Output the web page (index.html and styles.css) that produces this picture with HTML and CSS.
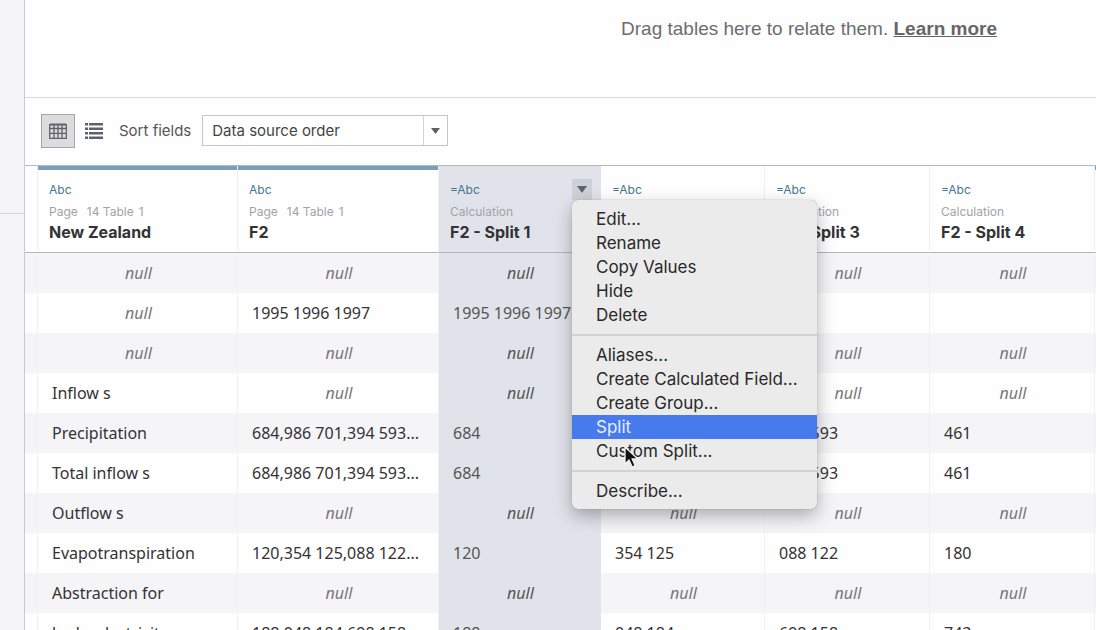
FILE: index.html
```html
<!DOCTYPE html>
<html lang="en">
<head>
<meta charset="utf-8">
<title>Data source</title>
<link rel="stylesheet" href="styles.css">
</head>
<body>
<div class="app">
  <aside class="side"><div class="side-top"></div></aside>
  <main class="main">
    <section class="canvas">
      <p class="hint">Drag tables here to relate them. <a href="#">Learn more</a></p>
    </section>
    <div class="toolbar">
      <button class="view view-on" aria-label="Grid view">
        <svg width="18" height="16" viewBox="0 0 18 16" fill="none" stroke="#5f626b"><path d="M1 1.5h16" stroke-width="2"/><path d="M.7 1v14.300h16.600V1M.7 5.500h16.600M.7 10.300h16.600M5 2v13M9 2v13M13 2v13" stroke-width="1.300"/></svg>
      </button>
      <button class="view" aria-label="List view">
        <svg width="18" height="16" viewBox="0 0 18 16" fill="#5f626b"><path d="M0 0h3v2.500H0zM4 0h14v2.500H4zM0 4.500h3V7H0zM4 4.500h14V7H4zM0 9h3v2.500H0zM4 9h14v2.500H4zM0 13.500h3V16H0zM4 13.500h14V16H4z"/></svg>
      </button>
      <label class="sort-label" for="sort">Sort fields</label>
      <div class="select">
        <select id="sort"><option>Data source order</option></select>
        <span class="select-arrow"><svg width="9" height="6" viewBox="0 0 9 6"><path d="M0 0h9L4.500 6z" fill="#5c5f63"/></svg></span>
      </div>
    </div>
    <div class="grid">
      <table class="data">
        <colgroup><col class="c-gutter"><col class="c-first"><col class="c-wide"><col class="c-sel"><col class="c-calc-first"><col class="c-calc"><col class="c-calc"><col></colgroup>
        <thead>
          <tr>
            <td></td>
            <th class="source"><span class="type">Abc</span><span class="origin"><span>Page</span> <span>14 Table</span> <span>1</span></span><span class="name">New Zealand</span></th>
            <th class="source"><span class="type">Abc</span><span class="origin"><span>Page</span> <span>14 Table</span> <span>1</span></span><span class="name">F2</span></th>
            <th class="sel"><span class="type">=Abc</span><span class="origin">Calculation</span><span class="name">F2 - Split 1</span>
              <div class="drop">
                <button class="drop-btn" aria-label="Field options"><svg width="10" height="7" viewBox="0 0 10 7"><path d="M0 0h10L5 7z" fill="#5b6570"/></svg></button>
                <div class="menu" role="menu">
                  <button role="menuitem">Edit...</button>
                  <button role="menuitem">Rename</button>
                  <button role="menuitem">Copy Values</button>
                  <button role="menuitem">Hide</button>
                  <button role="menuitem">Delete</button>
                  <hr>
                  <button role="menuitem">Aliases...</button>
                  <button role="menuitem">Create Calculated Field...</button>
                  <button role="menuitem">Create Group...</button>
                  <button role="menuitem" class="active">Split</button>
                  <button role="menuitem">Custom Split...</button>
                  <hr>
                  <button role="menuitem">Describe...</button>
                  <svg class="cursor" width="18" height="25" viewBox="0 0 18 25"><path d="M2 2v17l4-4 3.200 7 3-1.300-3-6.700h5.800z" fill="#111" stroke="#f4f4f4" stroke-width="1.300"/></svg>
                </div>
              </div>
            </th>
            <th><span class="type">=Abc</span></th>
            <th><span class="type">=Abc</span><span class="origin">Calculation</span><span class="name">F2 - Split 3</span></th>
            <th><span class="type">=Abc</span><span class="origin">Calculation</span><span class="name">F2 - Split 4</span></th>
            <th class="source"></th>
          </tr>
        </thead>
        <tbody>
          <tr><td></td><td class="null">null</td><td class="null">null</td><td class="sel null">null</td><td></td><td class="null">null</td><td class="null">null</td><td></td></tr>
          <tr><td></td><td class="null">null</td><td>1995 1996 1997</td><td class="sel">1995 1996 1997</td><td></td><td></td><td></td><td></td></tr>
          <tr><td></td><td class="null">null</td><td class="null">null</td><td class="sel null">null</td><td></td><td class="null">null</td><td class="null">null</td><td></td></tr>
          <tr><td></td><td>Inflow s</td><td class="null">null</td><td class="sel null">null</td><td></td><td class="null">null</td><td class="null">null</td><td></td></tr>
          <tr><td></td><td>Precipitation</td><td>684,986 701,394 593...</td><td class="sel">684</td><td></td><td>394 593</td><td>461</td><td></td></tr>
          <tr><td></td><td>Total inflow s</td><td>684,986 701,394 593...</td><td class="sel">684</td><td></td><td>394 593</td><td>461</td><td></td></tr>
          <tr><td></td><td>Outflow s</td><td class="null">null</td><td class="sel null">null</td><td class="null">null</td><td class="null">null</td><td class="null">null</td><td></td></tr>
          <tr><td></td><td>Evapotranspiration</td><td>120,354 125,088 122...</td><td class="sel">120</td><td>354 125</td><td>088 122</td><td>180</td><td></td></tr>
          <tr><td></td><td>Abstraction for</td><td class="null">null</td><td class="sel null">null</td><td class="null">null</td><td class="null">null</td><td class="null">null</td><td></td></tr>
          <tr><td></td><td>hydroelectricity</td><td>188,048 184,698 158...</td><td class="sel">188</td><td>048 184</td><td>698 158</td><td>743</td><td></td></tr>
        </tbody>
      </table>
    </div>
  </main>
</div>
</body>
</html>
```
FILE: styles.css
```css
* { box-sizing: border-box; }
body { margin: 0; font-family: "Noto Sans", sans-serif; font-size: 16px; color: #333; background: #fefefe; }
button { font: inherit; color: inherit; border: 0; padding: 0; background: none; }
svg { display: block; }
.app { display: flex; height: 100vh; overflow: hidden; }
.side { flex: none; width: 25px; background: #f5f4f7; border-right: 1px solid #c9cacd; }
.side-top { height: 214px; border-bottom: 1px solid #d5d5d9; }
.main { flex: 1; min-width: 0; display: flex; flex-direction: column; }
.canvas { flex: none; height: 98px; padding: 18px 99px 0 0; border-bottom: 1px solid #d9d9d9; text-align: right; }
.hint { margin: 0; font-family: "Liberation Sans", Arial, sans-serif; font-size: 19px; line-height: 22px; color: #6d6d6d; }
.hint a { color: #666; font-weight: bold; }
.toolbar { flex: none; height: 68px; display: flex; align-items: center; padding: 0 0 2px 16px; border-bottom: 1px solid #b6b8bb; font-family: Inter, sans-serif; }
.view { width: 34px; height: 34px; display: grid; place-items: center; margin-right: 2px; }
.view-on { background: #dcdcdf; border: 1px solid #a5a6a9; }
.sort-label { margin: 0 11px 0 6px; font-size: 15px; color: #555; }
.select { width: 246px; height: 31px; position: relative; display: flex; border: 1px solid #c4c5c7; background: #fff; }
.select select { appearance: none; flex: 1; border: 0; padding: 0 0 0 9px; background: none; font-family: Inter, sans-serif; font-size: 15px; color: #444; }
.select-arrow { position: absolute; right: 0; top: 0; bottom: 0; width: 24px; display: grid; place-items: center; border-left: 1px solid #d3d3d5; pointer-events: none; }
.grid { flex: 1; min-height: 0; overflow: hidden; }
.data { width: 100%; min-width: 1264px; table-layout: fixed; border-collapse: separate; border-spacing: 0; }
.c-gutter { width: 13px; }
.c-first { width: 200px; }
.c-wide { width: 201px; }
.c-sel { width: 162px; }
.c-calc-first { width: 164px; }
.c-calc { width: 165px; }
.data th { position: relative; height: 87px; padding: 17px 0 0 11px; vertical-align: top; text-align: left; font-weight: normal; border-right: 1px solid #f0f0f2; border-bottom: 1px solid #b3b5b9; font-family: Inter, sans-serif; }
.data thead td { border-bottom: 1px solid #b3b5b9; }
.data th.source::before { content: ""; position: absolute; top: 0; left: 0; right: 0; height: 4px; background: #78a1b9; }
.type, .origin, .name { display: block; white-space: nowrap; }
.type { font-size: 12px; line-height: 14px; color: #45758f; }
.origin { display: flex; gap: 9px; margin-top: 7px; font-size: 12px; line-height: 16px; color: #a3a3a5; }
.origin span + span + span { margin-left: -4px; }
.name { margin-top: 2px; font-size: 16px; line-height: 20px; font-weight: bold; color: #333; }
.data td { height: 40px; padding: 0 0 0 14px; white-space: nowrap; border-right: 1px solid #f1f1f3; }
.data td:first-child { padding: 0; }
.data tbody tr:nth-child(odd) { background: #f5f4f7; }
.data .null { padding: 0 0 0 2px; text-align: center; font-style: italic; color: #777; }
.data .sel { background: #e0e4ea; border-right-color: #e0e4ea; }
.data td.sel { color: #555; }
.drop { position: absolute; top: 13px; right: 8px; }
.drop-btn { width: 20px; height: 21px; display: grid; place-items: center; background: #cdd1d6; }
.menu { position: absolute; z-index: 2; left: 0; top: 100%; width: 245px; padding: 7px 0 6px; border-radius: 6px; background: #ebebeb; box-shadow: 0 0 1px #777, 0 7px 18px rgba(0, 0, 0, .3); font-family: Inter, sans-serif; font-size: 17px; color: #292929; }
.menu button { display: block; width: 100%; height: 24px; padding-left: 24px; text-align: left; line-height: 24px; }
.menu .active { background: #467aed; color: #e7effd; }
.menu hr { height: 2px; margin: 7px 0; border: 0; background: #d2d2d2; }
.cursor { position: absolute; left: 51px; top: 245px; }
```
